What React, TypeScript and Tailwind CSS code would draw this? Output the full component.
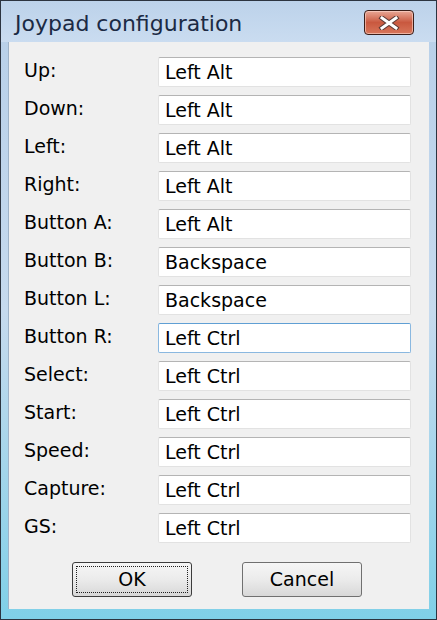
import { useState } from 'react';

const bindings = [
  { label: 'Up:', value: 'Left Alt' },
  { label: 'Down:', value: 'Left Alt' },
  { label: 'Left:', value: 'Left Alt' },
  { label: 'Right:', value: 'Left Alt' },
  { label: 'Button A:', value: 'Left Alt' },
  { label: 'Button B:', value: 'Backspace' },
  { label: 'Button L:', value: 'Backspace' },
  { label: 'Button R:', value: 'Left Ctrl' },
  { label: 'Select:', value: 'Left Ctrl' },
  { label: 'Start:', value: 'Left Ctrl' },
  { label: 'Speed:', value: 'Left Ctrl' },
  { label: 'Capture:', value: 'Left Ctrl' },
  { label: 'GS:', value: 'Left Ctrl' },
];

const CloseGlyph = () => (
  <svg width="22" height="14" viewBox="0 0 22 14">
    <path d="M4 2 L18 12 M18 2 L4 12" stroke="#5a3a36" strokeWidth="5" strokeLinecap="square" />
    <path d="M4 2 L18 12 M18 2 L4 12" stroke="#ffffff" strokeWidth="3" strokeLinecap="square" />
  </svg>
);

export default function App() {
  const [focused] = useState(7);

  return (
    <div className="w-[437px] h-[620px] flex flex-col border border-[#2c3440] bg-gradient-to-b from-[#b7cfe8] via-[#c6daee] to-[#7fd0e8] overflow-hidden">
      <div className="h-[41px] flex items-start justify-between pl-[14px] pr-[22px] bg-gradient-to-b from-[#bcd2ea] to-[#cadcf0]">
        <span className="mt-[12px] text-[22px] text-[#1b2a44] [font-family:'DejaVu_Sans',sans-serif] leading-none">
          Joypad configuration
        </span>
        <div className="mt-[9px] w-[50px] h-[25px] rounded-[4px] border border-[#3b1e18] bg-gradient-to-b from-[#e8a796] via-[#c9583f] to-[#d8765a] flex items-center justify-center shadow-[inset_0_0_0_1px_rgba(255,220,210,0.6)]">
          <CloseGlyph />
        </div>
      </div>

      <div className="mx-[7px] mb-[10px] flex-1 bg-[#f0f0f0] border-l border-[#9fb3c8] pt-[15px] pl-[15px] pr-[17px] flex flex-col [font-family:'DejaVu_Sans',sans-serif] text-black">
        <div className="flex flex-col gap-[8px]">
          {bindings.map((b, i) => (
            <div key={b.label} className="flex items-start h-[30px]">
              <span className="w-[134px] text-[19px] leading-none pt-[4px]">{b.label}</span>
              <div
                className={`w-[253px] h-[30px] bg-white rounded-[2px] flex items-center pl-[6px] text-[19px] leading-none border ${
                  i === focused
                    ? 'border-[#8ab8e0] border-t-[#5f9fd4]'
                    : 'border-[#e2e2e2] border-t-[#b4b4b4]'
                }`}
              >
                {b.value}
              </div>
            </div>
          ))}
        </div>

        <div className="flex justify-center gap-[50px] mt-[19px] pr-[2px]">
          <button className="w-[120px] h-[35px] rounded-[3px] border border-[#3c3c3c] bg-gradient-to-b from-[#f6f6f6] via-[#ebebeb] to-[#d8d8d8] p-[3px]">
            <div className="w-full h-full border border-dotted border-[#202020] flex items-center justify-center text-[19px] leading-none">
              OK
            </div>
          </button>
          <button className="w-[120px] h-[35px] rounded-[3px] border border-[#707070] bg-gradient-to-b from-[#f6f6f6] via-[#ebebeb] to-[#d8d8d8] flex items-center justify-center text-[19px] leading-none">
            Cancel
          </button>
        </div>
      </div>
    </div>
  );
}
